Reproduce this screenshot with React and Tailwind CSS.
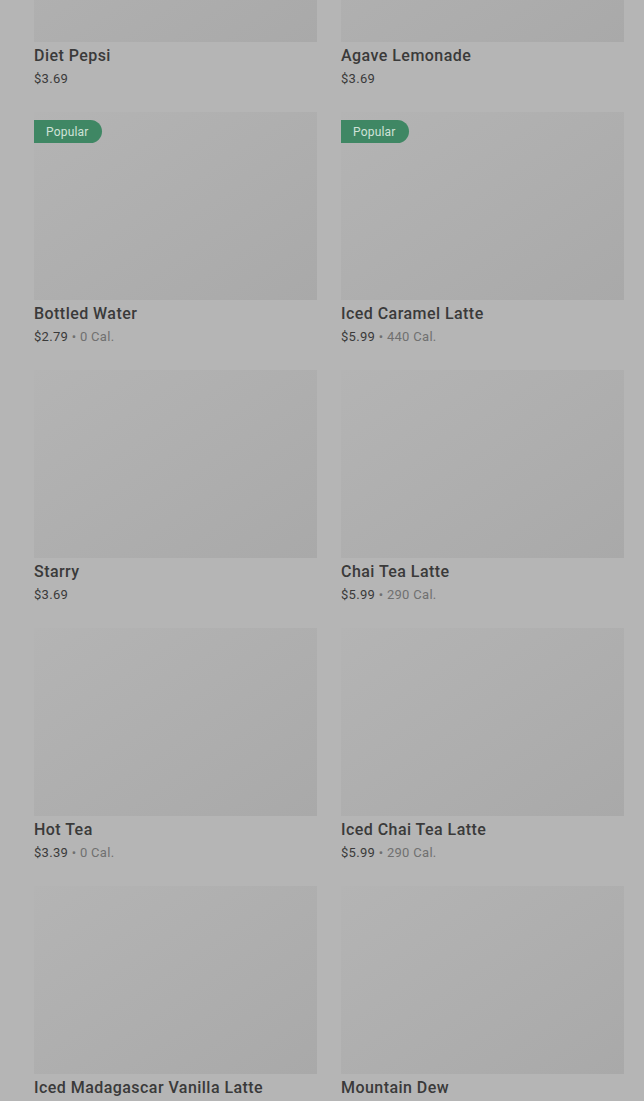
import React from 'react'

const items = [
  { name: 'Diet Pepsi', price: '$3.69' },
  { name: 'Agave Lemonade', price: '$3.69' },
  { name: 'Bottled Water', price: '$2.79', cal: '0 Cal.', popular: true },
  { name: 'Iced Caramel Latte', price: '$5.99', cal: '440 Cal.', popular: true },
  { name: 'Starry', price: '$3.69' },
  { name: 'Chai Tea Latte', price: '$5.99', cal: '290 Cal.' },
  { name: 'Hot Tea', price: '$3.39', cal: '0 Cal.' },
  { name: 'Iced Chai Tea Latte', price: '$5.99', cal: '290 Cal.' },
  { name: 'Iced Madagascar Vanilla Latte', price: '$5.99', cal: '250 Cal.' },
  { name: 'Mountain Dew', price: '$3.69' },
]

function MenuCard({ item }) {
  return (
    <div className="flex flex-col pb-[22px]">
      <div className="relative h-[188px] bg-gradient-to-br from-[#b4b4b4] to-[#a9a9a9]">
        {item.popular && (
          <span className="absolute left-0 top-[8px] flex h-[23px] items-center rounded-r-full bg-[#3f8764] pl-[12px] pr-[13px] text-[12px] tracking-[0.2px] text-[#cfe2d8]">
            Popular
          </span>
        )}
      </div>
      <div className="mt-[3px] text-[16px] font-medium leading-[22px] tracking-[0.45px] text-[#3a3a3a]">
        {item.name}
      </div>
      <div className="mt-[1px] text-[13px] leading-[22px] tracking-[0.3px] text-[#3a3a3a]">
        {item.price}
        {item.cal && (
          <span className="text-[#707070]">
            {' '}• {item.cal}
          </span>
        )}
      </div>
    </div>
  )
}

export default function App() {
  return (
    <div
      className="h-[1101px] overflow-hidden bg-[#b5b5b5]"
      style={{ fontFamily: 'Roboto, "Liberation Sans", sans-serif' }}
    >
      <div className="mt-[-146px] grid grid-cols-2 gap-x-[24px] pl-[34px] pr-[20px]">
        {items.map((item) => (
          <MenuCard key={item.name} item={item} />
        ))}
      </div>
    </div>
  )
}
